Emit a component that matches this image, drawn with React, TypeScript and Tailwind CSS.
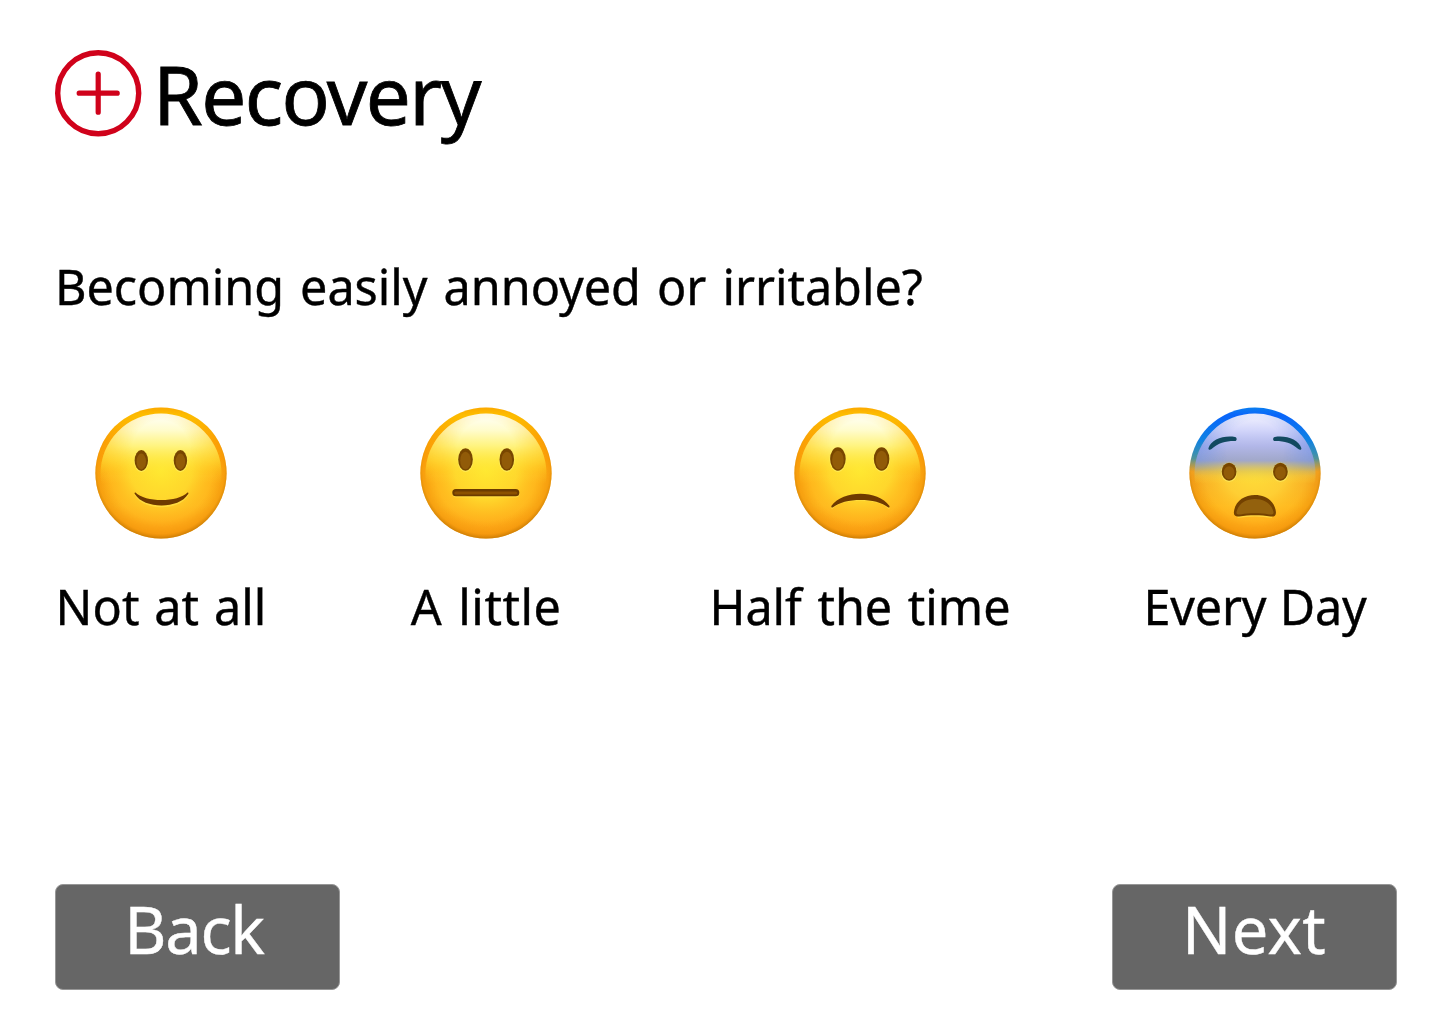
import { useId } from "react";
import type { ReactNode } from "react";

type Mood = "smile" | "neutral" | "frown" | "fearful";

const options: { mood: Mood; label: string; className: string }[] = [
  { mood: "smile", label: "Not at all", className: "w-[212px] tracking-[0.1px] [word-spacing:2px]" },
  { mood: "neutral", label: "A little", className: "ml-[144px] w-[150px] tracking-[0.5px] [word-spacing:3px]" },
  { mood: "frown", label: "Half the time", className: "ml-[149px] w-[300px] [word-spacing:3px]" },
  { mood: "fearful", label: "Every Day", className: "ml-[134px] w-[222px] tracking-[-0.2px] [word-spacing:1px]" },
];

function Logo() {
  return (
    <svg viewBox="0 0 88 88" className="mt-[49px] size-[88px] shrink-0" fill="none" stroke="#d0021b" strokeLinecap="round" aria-hidden="true">
      <circle cx="44.2" cy="44.2" r="40.5" strokeWidth="5.4" />
      <path d="M44.2 25.2v38M25.2 44.2h38" strokeWidth="5.2" />
    </svg>
  );
}

function Eyes({ left, right, cy, rx, ry }: { left: number; right: number; cy: number; rx: number; ry: number }) {
  return (
    <>
      {[left, right].map((cx) => (
        <g key={cx}>
          <ellipse cx={cx} cy={cy + 0.6} rx={rx + 0.6} ry={ry + 0.7} fill="#fff36b" opacity="0.6" />
          <ellipse cx={cx} cy={cy} rx={rx} ry={ry} fill="#784600" />
          <ellipse cx={cx} cy={cy + 1} rx={rx - 2} ry={ry - 2.5} fill="#915b08" />
        </g>
      ))}
    </>
  );
}

const features: Record<Mood, ReactNode> = {
  smile: (
    <>
      <Eyes left={46.3} right={85.4} cy={53.5} rx={6.7} ry={10.4} />
      <path d="M40.3 87.5C49 103.5 84 103.5 92.8 87.5" fill="none" stroke="#ffe14a" strokeWidth="1.6" opacity="0.7" />
      <path d="M40.5 85.5C50 95.5 83 95.5 92.5 85.5C93.4 85.1 93.8 86 93 87.3C84 102.2 49 102.2 40 87.3C39.2 86 39.6 85.1 40.5 85.5Z" fill="#6f3900" />
    </>
  ),
  neutral: (
    <>
      <Eyes left={45.5} right={86.8} cy={52.5} rx={7.3} ry={11.2} />
      <rect x="32.5" y="82.9" width="67" height="7.6" rx="3.8" fill="#ffe14a" opacity="0.7" />
      <rect x="32.3" y="82" width="67" height="7.3" rx="3.6" fill="#6b3b00" />
      <rect x="34.3" y="84.4" width="63" height="3.2" rx="1.6" fill="#8b5100" />
    </>
  ),
  frown: (
    <>
      <Eyes left={43.9} right={87.6} cy={52} rx={7.8} ry={11.7} />
      <path d="M37.5 101.5C48 90 85 90 95.3 101.5" fill="none" stroke="#ffe14a" strokeWidth="1.6" opacity="0.7" />
      <path d="M37.5 98.8C49 82.6 84 82.6 95.3 98.8C96 100 95.2 101.1 94 100.3C83 90.4 50 90.4 39 100.3C37.7 101.1 36.9 100 37.5 98.8Z" fill="#6f3900" />
    </>
  ),
  fearful: (
    <>
      <Eyes left={40.1} right={91.4} cy={64.7} rx={7.4} ry={9} />
      <path d="M19.5 41C22 32.5 34.5 28 46 29.9C48.3 30.3 48.2 34 45.8 34.1C36.5 34 29.5 36 22.5 42.1C20.8 43.5 19 42.8 19.5 41Z" fill="#124960" />
      <path d="M112.3 41C109.8 32.5 97.3 28 85.8 29.9C83.5 30.3 83.6 34 86 34.1C95.3 34 102.3 36 109.3 42.1C111 43.5 112.8 42.8 112.3 41Z" fill="#124960" />
      <path d="M48.5 110.2C59 108.2 73 108.2 83 110.2" fill="none" stroke="#ffe14a" strokeWidth="1.8" opacity="0.7" />
      <path d="M44.9 105C46 94 55.5 88 65.9 88C76.3 88 86 94 86.9 105C87.2 108.7 85 110 81.5 109.4C72 107.8 60 107.8 50.3 109.4C46.8 110 44.5 108.7 44.9 105Z" fill="#734100" />
      <path d="M47.5 105C49.5 96.5 57 92 65.9 92C74.8 92 82.5 96.5 84.5 105C84.9 107.3 83 108 80 107.4C71 106 60 106 52 107.4C49 108 47.1 107.3 47.5 105Z" fill="#93610d" />
    </>
  ),
};

function Face({ mood }: { mood: Mood }) {
  const id = useId();
  const scared = mood === "fearful";

  return (
    <svg viewBox="0 0 132 132" className="size-[132px] shrink-0" role="img" aria-label={mood}>
      <defs>
        <linearGradient id={`${id}base`} x1="0" y1="0" x2="0" y2="1">
          <stop offset="0" stopColor={scared ? "#0b7ff0" : "#ffb000"} />
          <stop offset="0.06" stopColor={scared ? "#0a65fa" : "#ffc400"} />
          <stop offset="0.25" stopColor={scared ? "#0b82e8" : "#ffa906"} />
          <stop offset="0.39" stopColor={scared ? "#3f94ac" : "#ffa50c"} />
          <stop offset="0.49" stopColor={scared ? "#f3a92a" : "#ffad16"} />
          <stop offset="0.75" stopColor="#ffb61e" />
          <stop offset="1" stopColor="#ffa518" />
        </linearGradient>
        <radialGradient id={`${id}rim`} cx="0.5" cy="0.48" r="0.525">
          <stop offset="0.74" stopColor="#f08c00" stopOpacity="0" />
          <stop offset="0.92" stopColor="#ea8600" stopOpacity="0.4" />
          <stop offset="1" stopColor="#b87000" stopOpacity="0.85" />
        </radialGradient>
        <linearGradient id={`${id}fade`} x1="0" y1="0" x2="0" y2="1">
          <stop offset="0.1" stopColor="#fff" stopOpacity={scared ? 0 : 0.4} />
          <stop offset="0.35" stopColor="#fff" stopOpacity={scared ? 0.1 : 0.75} />
          <stop offset="0.55" stopColor="#fff" />
        </linearGradient>
        <mask id={`${id}mask`}>
          <rect width="132" height="132" fill={`url(#${id}fade)`} />
        </mask>
        <radialGradient id={`${id}glow`} cx="0.5" cy="0.5" r="0.5">
          <stop offset="0" stopColor={scared ? "#ffdf38" : "#ffe82f"} />
          <stop offset="0.5" stopColor={scared ? "#ffd638" : "#ffe030"} stopOpacity="0.8" />
          <stop offset="1" stopColor="#ffc020" stopOpacity="0" />
        </radialGradient>
        <linearGradient id={`${id}shine`} x1="0" y1="0" x2="0" y2="1">
          <stop offset="0" stopColor={scared ? "#f4f4ff" : "#fffffa"} />
          <stop offset="0.14" stopColor={scared ? "#d2d5fa" : "#fffccc"} />
          <stop offset="0.27" stopColor={scared ? "#b0b6f0" : "#fff583"} stopOpacity="0.95" />
          <stop offset="0.39" stopColor={scared ? "#99a3d8" : "#ffef50"} stopOpacity={scared ? 0.9 : 0.6} />
          <stop offset="0.48" stopColor={scared ? "#d5c060" : "#ffe83a"} stopOpacity={scared ? 0.55 : 0.22} />
          <stop offset="0.58" stopColor="#ffdf35" stopOpacity="0" />
        </linearGradient>
        <radialGradient id={`${id}tint`} cx="0.5" cy="0.3" r="0.6">
          <stop offset="0.4" stopColor={scared ? "#6d8ee8" : "#ffc800"} stopOpacity="0" />
          <stop offset="1" stopColor={scared ? "#5581df" : "#ffb400"} stopOpacity="0.65" />
        </radialGradient>
        <linearGradient id={`${id}tintFade`} x1="0" y1="0" x2="0" y2="1">
          <stop offset="0.3" stopColor="#fff" />
          <stop offset="0.52" stopColor="#fff" stopOpacity="0" />
        </linearGradient>
        <mask id={`${id}tintMask`}>
          <rect width="132" height="132" fill={`url(#${id}tintFade)`} />
        </mask>
      </defs>
      <circle cx="66" cy="66" r="65.6" fill={`url(#${id}base)`} />
      <circle cx="66" cy="66" r="65.6" fill={`url(#${id}rim)`} mask={`url(#${id}mask)`} />
      <ellipse cx="66" cy="64" rx="62" ry="56" fill={`url(#${id}glow)`} />
      <circle cx="66" cy="67" r="60.5" fill={`url(#${id}shine)`} />
      <circle cx="66" cy="67" r="60.5" fill={`url(#${id}tint)`} mask={`url(#${id}tintMask)`} />
      {features[mood]}
    </svg>
  );
}

export default function App() {
  return (
    <main className="flex h-[1024px] w-[1440px] flex-col overflow-hidden bg-white font-['Noto_Sans',sans-serif] text-black">
      <header className="flex h-[254px] pl-[54px]">
        <Logo />
        <h1 className="mt-[44px] ml-[11px] text-[80px] leading-[100px] font-normal tracking-[-1.6px] [-webkit-text-stroke:0.8px_currentColor]">Recovery</h1>
      </header>

      <section className="flex h-[630px] flex-col pl-[55px] text-[48.5px] leading-[64px] whitespace-nowrap [-webkit-text-stroke:0.4px_currentColor]">
        <h2 className="tracking-[-0.02px] [word-spacing:3.5px]">Becoming easily annoyed or irritable?</h2>
        <div className="mt-[89px] flex">
          {options.map(({ mood, label, className }) => (
            <button key={mood} type="button" className={`flex flex-col items-center ${className}`}>
              <Face mood={mood} />
              <span className="mt-[35px]">{label}</span>
            </button>
          ))}
        </div>
      </section>

      <nav className="flex justify-between pr-[43px] pl-[55px] text-[65px] leading-[80px] text-white [-webkit-text-stroke:0.4px_currentColor]">
        <button type="button" className="flex h-[106px] w-[285px] justify-center rounded-[8px] border border-[#979797] bg-[#666] pt-[4px] pr-[7px] tracking-[-1.3px]">
          Back
        </button>
        <button type="button" className="flex h-[106px] w-[285px] justify-center rounded-[8px] border border-[#979797] bg-[#666] pt-[4px] pr-[1px] tracking-[0.3px]">
          Next
        </button>
      </nav>
    </main>
  );
}
